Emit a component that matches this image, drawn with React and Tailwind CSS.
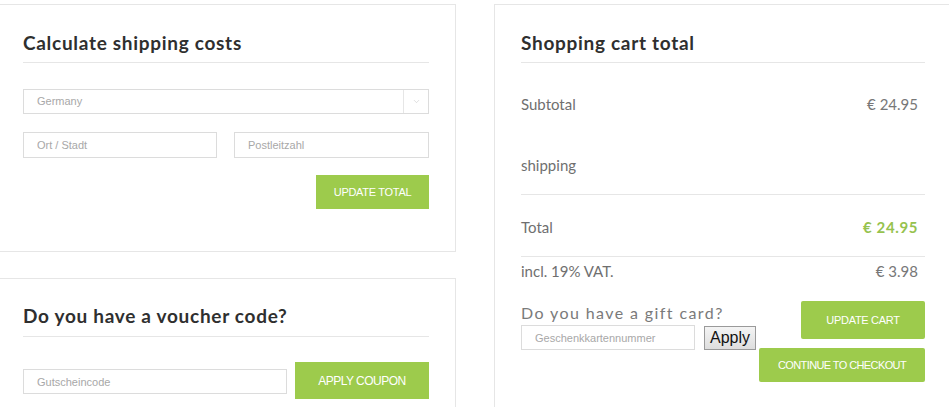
import { ChevronDown } from "lucide-react";

const heading = "font-['Lato',sans-serif] font-bold text-[19px] leading-[24px] tracking-[0.7px] text-[#2f2f2f]";
const field =
  "border border-[#dcdcdc] bg-white px-[13px] font-['Liberation_Sans',Arial,sans-serif] text-[11px] text-[#a8a8a8] outline-none placeholder:text-[#a8a8a8]";
const greenBtn =
  "bg-[#9dcb4c] text-white font-['Liberation_Sans',Arial,sans-serif] text-[11px] uppercase tracking-[-0.3px] flex items-center justify-center";

function ShippingCard() {
  return (
    <div className="w-[456px] border border-l-0 border-[#e6e6e6] pl-[23px] pr-[26px] pt-[26px] pb-[42px]">
      <h2 className={`${heading} pb-[7px] border-b border-[#e6e6e6]`}>Calculate shipping costs</h2>
      <div className="mt-[26px] h-[25px] border border-[#dcdcdc] flex items-stretch">
        <div className="flex-1 flex items-center px-[13px] font-['Liberation_Sans',Arial,sans-serif] text-[11px] text-[#a8a8a8]">
          Germany
        </div>
        <div className="w-[25px] border-l border-[#e6e6e6] flex items-center justify-center">
          <ChevronDown size={9} strokeWidth={1.5} className="text-[#c8c8c8]" />
        </div>
      </div>
      <div className="mt-[18px] flex gap-[17px]">
        <input className={`${field} h-[26px] w-[194px]`} placeholder="Ort / Stadt" />
        <input className={`${field} h-[26px] flex-1`} placeholder="Postleitzahl" />
      </div>
      <div className="mt-[17px] flex justify-end">
        <button className={`${greenBtn} w-[113px] h-[34px]`}>Update total</button>
      </div>
    </div>
  );
}

function VoucherCard() {
  return (
    <div className="mt-[26px] w-[456px] border border-l-0 border-b-0 border-[#e6e6e6] pl-[23px] pr-[26px] pt-[25px] pb-[20px]">
      <h2 className={`${heading} pb-[8px] border-b border-[#e6e6e6]`}>Do you have a voucher code?</h2>
      <div className="mt-[25px] flex items-center gap-[8px]">
        <input className={`${field} h-[25px] w-[264px] mt-[2px]`} placeholder="Gutscheincode" />
        <button className={`${greenBtn} flex-1 h-[37px] text-[12px] tracking-[-0.5px]`}>Apply coupon</button>
      </div>
    </div>
  );
}

function Row({ label, value, valueClass = "text-[#777]" }) {
  return (
    <div className="flex justify-between items-center pr-[7px] leading-[20px]">
      <span>{label}</span>
      {value && <span className={valueClass}>{value}</span>}
    </div>
  );
}

function CartCard() {
  return (
    <div className="flex-1 border-l border-t border-[#e6e6e6] pl-[26px] pr-[24px] pt-[26px] pb-[40px] font-['Lato',sans-serif] text-[15px] text-[#6f6f6f]">
      <h2 className={`${heading} pb-[7px] border-b border-[#e6e6e6]`}>Shopping cart total</h2>
      <div className="pt-[31px]">
        <Row label="Subtotal" value="€ 24.95" />
      </div>
      <div className="pt-[41px] pb-[19px] border-b border-[#e6e6e6]">
        <Row label="shipping" />
      </div>
      <div className="pt-[22px] pb-[19px] border-b border-[#e6e6e6]">
        <Row label="Total" value="€ 24.95" valueClass="text-[#96c24e] font-bold tracking-[0.6px]" />
      </div>
      <div className="pt-[4px]">
        <Row label="incl. 19% VAT." value="€ 3.98" />
      </div>
      <div className="flex justify-between">
        <div className="pt-[22px]">
          <div className="text-[16px] leading-[20px] tracking-[1.4px] text-[#7a7a7a]">Do you have a gift card?</div>
          <div className="mt-[2px] flex items-center gap-[9px]">
            <input className={`${field} h-[25px] w-[174px]`} placeholder="Geschenkkartennummer" />
            <button className="h-[24px] px-[5px] border border-[#9a9a9a] bg-gradient-to-b from-[#f4f4f4] to-[#dedede] font-['Liberation_Sans',Arial,sans-serif] text-[16px] leading-none text-[#111]">
              Apply
            </button>
          </div>
        </div>
        <div className="pt-[20px] flex flex-col items-end">
          <button className={`${greenBtn} w-[124px] h-[38px] rounded-[2px]`}>Update cart</button>
          <button className={`${greenBtn} mt-[9px] w-[166px] h-[34px] rounded-[2px] tracking-[-0.6px]`}>
            Continue to checkout
          </button>
        </div>
      </div>
    </div>
  );
}

export default function App() {
  return (
    <div className="w-[949px] h-[407px] overflow-hidden bg-white pt-[4px] flex gap-[38px]">
      <div className="flex flex-col">
        <ShippingCard />
        <VoucherCard />
      </div>
      <CartCard />
    </div>
  );
}
